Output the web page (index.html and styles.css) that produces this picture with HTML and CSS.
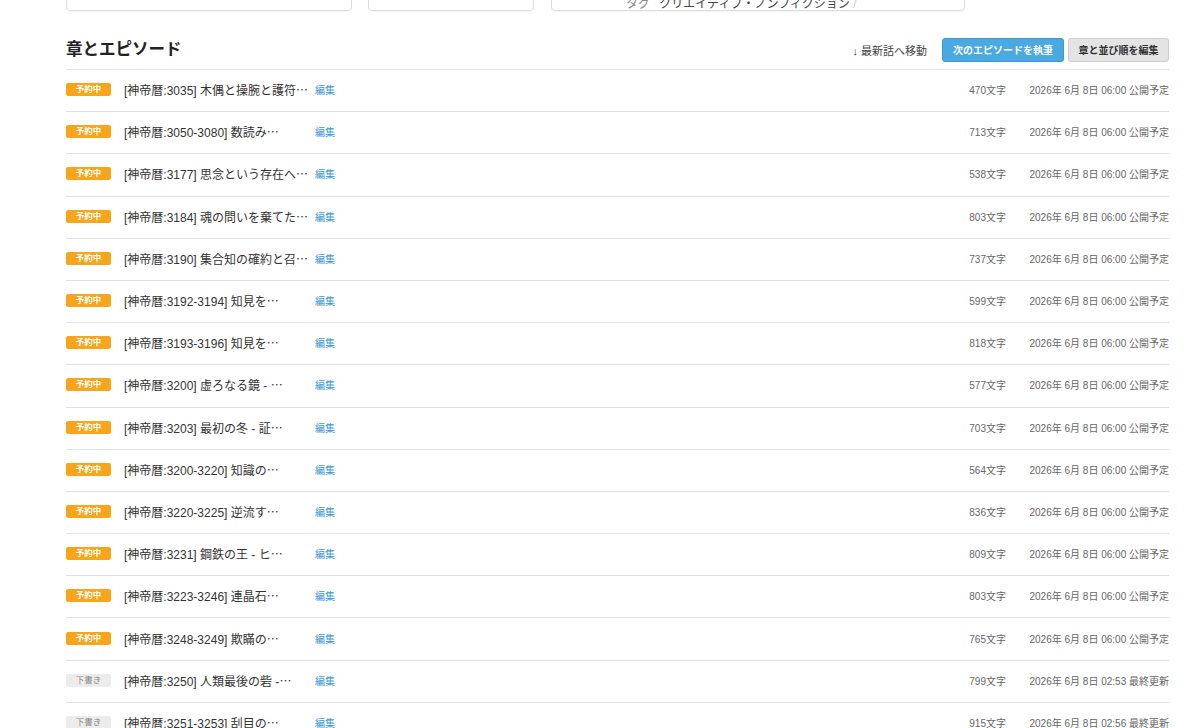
FILE: index.html
```html
<!DOCTYPE html>
<html lang="ja">
<head>
<meta charset="UTF-8" />
<meta name="viewport" content="width=device-width, initial-scale=1" />
<title>章とエピソード</title>
<link rel="stylesheet" href="styles.css">
</head>
<body>
  <div class="page">
    <div class="info-boxes">
      <div class="info-box box-a"></div>
      <div class="info-box box-b"></div>
      <div class="info-box box-c">
        <span class="tag-label">タグ</span>
        <span class="tag-value">クリエイティブ・ノンフィクション</span>
        <span class="tag-sep">/</span>
      </div>
    </div>

    <div class="section-head">
      <h2>章とエピソード</h2>
      <div class="actions">
        <a class="jump-link" href="#latest">↓ 最新話へ移動</a>
        <button class="btn btn-primary">次のエピソードを執筆</button>
        <button class="btn btn-plain">章と並び順を編集</button>
      </div>
    </div>

    <ul class="episodes">
      <li class="episode">
        <span class="badge badge-reserved">予約中</span>
        <span class="title">[神帝暦:3035] 木偶と操腕と護符<span class="ell">…</span></span>
        <a class="edit" href="#">編集</a>
        <span class="chars">470文字</span>
        <span class="date">2026年 6月 8日 06:00 公開予定</span>
      </li>
      <li class="episode">
        <span class="badge badge-reserved">予約中</span>
        <span class="title">[神帝暦:3050-3080] 数読み<span class="ell">…</span></span>
        <a class="edit" href="#">編集</a>
        <span class="chars">713文字</span>
        <span class="date">2026年 6月 8日 06:00 公開予定</span>
      </li>
      <li class="episode">
        <span class="badge badge-reserved">予約中</span>
        <span class="title">[神帝暦:3177] 思念という存在へ<span class="ell">…</span></span>
        <a class="edit" href="#">編集</a>
        <span class="chars">538文字</span>
        <span class="date">2026年 6月 8日 06:00 公開予定</span>
      </li>
      <li class="episode">
        <span class="badge badge-reserved">予約中</span>
        <span class="title">[神帝暦:3184] 魂の問いを棄てた<span class="ell">…</span></span>
        <a class="edit" href="#">編集</a>
        <span class="chars">803文字</span>
        <span class="date">2026年 6月 8日 06:00 公開予定</span>
      </li>
      <li class="episode">
        <span class="badge badge-reserved">予約中</span>
        <span class="title">[神帝暦:3190] 集合知の確約と召<span class="ell">…</span></span>
        <a class="edit" href="#">編集</a>
        <span class="chars">737文字</span>
        <span class="date">2026年 6月 8日 06:00 公開予定</span>
      </li>
      <li class="episode">
        <span class="badge badge-reserved">予約中</span>
        <span class="title">[神帝暦:3192-3194] 知見を<span class="ell">…</span></span>
        <a class="edit" href="#">編集</a>
        <span class="chars">599文字</span>
        <span class="date">2026年 6月 8日 06:00 公開予定</span>
      </li>
      <li class="episode">
        <span class="badge badge-reserved">予約中</span>
        <span class="title">[神帝暦:3193-3196] 知見を<span class="ell">…</span></span>
        <a class="edit" href="#">編集</a>
        <span class="chars">818文字</span>
        <span class="date">2026年 6月 8日 06:00 公開予定</span>
      </li>
      <li class="episode">
        <span class="badge badge-reserved">予約中</span>
        <span class="title">[神帝暦:3200] 虚ろなる鏡 - <span class="ell">…</span></span>
        <a class="edit" href="#">編集</a>
        <span class="chars">577文字</span>
        <span class="date">2026年 6月 8日 06:00 公開予定</span>
      </li>
      <li class="episode">
        <span class="badge badge-reserved">予約中</span>
        <span class="title">[神帝暦:3203] 最初の冬 - 証<span class="ell">…</span></span>
        <a class="edit" href="#">編集</a>
        <span class="chars">703文字</span>
        <span class="date">2026年 6月 8日 06:00 公開予定</span>
      </li>
      <li class="episode">
        <span class="badge badge-reserved">予約中</span>
        <span class="title">[神帝暦:3200-3220] 知識の<span class="ell">…</span></span>
        <a class="edit" href="#">編集</a>
        <span class="chars">564文字</span>
        <span class="date">2026年 6月 8日 06:00 公開予定</span>
      </li>
      <li class="episode">
        <span class="badge badge-reserved">予約中</span>
        <span class="title">[神帝暦:3220-3225] 逆流す<span class="ell">…</span></span>
        <a class="edit" href="#">編集</a>
        <span class="chars">836文字</span>
        <span class="date">2026年 6月 8日 06:00 公開予定</span>
      </li>
      <li class="episode">
        <span class="badge badge-reserved">予約中</span>
        <span class="title">[神帝暦:3231] 鋼鉄の王 - ヒ<span class="ell">…</span></span>
        <a class="edit" href="#">編集</a>
        <span class="chars">809文字</span>
        <span class="date">2026年 6月 8日 06:00 公開予定</span>
      </li>
      <li class="episode">
        <span class="badge badge-reserved">予約中</span>
        <span class="title">[神帝暦:3223-3246] 連晶石<span class="ell">…</span></span>
        <a class="edit" href="#">編集</a>
        <span class="chars">803文字</span>
        <span class="date">2026年 6月 8日 06:00 公開予定</span>
      </li>
      <li class="episode">
        <span class="badge badge-reserved">予約中</span>
        <span class="title">[神帝暦:3248-3249] 欺瞞の<span class="ell">…</span></span>
        <a class="edit" href="#">編集</a>
        <span class="chars">765文字</span>
        <span class="date">2026年 6月 8日 06:00 公開予定</span>
      </li>
      <li class="episode">
        <span class="badge badge-draft">下書き</span>
        <span class="title">[神帝暦:3250] 人類最後の砦 -<span class="ell">…</span></span>
        <a class="edit" href="#">編集</a>
        <span class="chars">799文字</span>
        <span class="date">2026年 6月 8日 02:53 最終更新</span>
      </li>
      <li class="episode" id="latest">
        <span class="badge badge-draft">下書き</span>
        <span class="title">[神帝暦:3251-3253] 刮目の<span class="ell">…</span></span>
        <a class="edit" href="#">編集</a>
        <span class="chars">915文字</span>
        <span class="date">2026年 6月 8日 02:56 最終更新</span>
      </li>
    </ul>
  </div>
</body>
</html>
```

FILE: styles.css
```css
/* Reset & base */
* {
  box-sizing: border-box;
}
body {
  margin: 0;
  background: #fff;
  color: #333;
  font-family: "Liberation Sans", "Noto Sans CJK JP", sans-serif;
  overflow: hidden;
}
.page {
  padding: 0 31px 0 66px;
}

/* Boxes cut off at the top */
.info-boxes {
  display: flex;
  margin-top: -30px;
}
.info-box {
  height: 41px;
  border: 1px solid #ddd;
  border-radius: 4px;
  box-shadow: 0 1px 1px rgba(0, 0, 0, 0.04);
}
.box-a {
  width: 286px;
}
.box-b {
  width: 166px;
  margin-left: 16px;
}
.box-c {
  width: 414px;
  margin-left: 17px;
  padding: 26px 0 0 74px;
  font-size: 12px;
  line-height: 14px;
  white-space: nowrap;
}
.tag-label {
  color: #888;
  margin-right: 6px;
}
.tag-value {
  color: #444;
}
.tag-sep {
  color: #ccc;
}

/* Section header */
.section-head {
  display: flex;
  align-items: center;
  justify-content: space-between;
  margin-top: 25px;
  padding-bottom: 6px;
  border-bottom: 1px solid #e2e2e2;
}
h2 {
  margin: 0 0 3px;
  font-size: 16.5px;
  font-weight: 700;
  color: #222;
}
.actions {
  display: flex;
  align-items: center;
}
.jump-link {
  font-size: 11px;
  color: #444;
  text-decoration: none;
  margin-right: 15px;
}
.btn {
  height: 24px;
  border-radius: 3px;
  font-family: inherit;
  font-size: 10px;
  font-weight: 700;
  padding: 0 9px;
  cursor: pointer;
}
.btn-primary {
  background: #4aa9e0;
  border: 1px solid #3b9ad3;
  color: #fff;
  width: 122px;
}
.btn-plain {
  background: #e4e4e4;
  border: 1px solid #cfcfcf;
  color: #333;
  width: 101px;
  margin-left: 4px;
}

/* Episode list */
.episodes {
  list-style: none;
  margin: 0;
  padding: 0;
}
.episode {
  display: flex;
  align-items: center;
  height: 42.2px;
  padding-bottom: 2px;
  border-bottom: 1px solid #e2e2e2;
  font-size: 12px;
}
.badge {
  width: 45px;
  height: 13px;
  border-radius: 2px;
  font-size: 8.5px;
  font-weight: 700;
  line-height: 13px;
  text-align: center;
  flex-shrink: 0;
}
.badge-reserved {
  background: #f8a51b;
  color: #fff;
}
.badge-draft {
  background: #ececec;
  color: #888;
  font-weight: 400;
}
.title {
  width: 191px;
  margin-left: 13px;
  color: #333;
  white-space: nowrap;
  overflow: hidden;
}
.ell {
  font-family: "Noto Sans CJK JP", sans-serif;
}
.edit {
  color: #3a98d6;
  font-size: 10px;
  text-decoration: none;
}
.chars {
  margin-left: auto;
  font-size: 10px;
  color: #666;
  text-align: right;
}
.date {
  width: 163px;
  font-size: 10px;
  color: #666;
  text-align: right;
}
```
